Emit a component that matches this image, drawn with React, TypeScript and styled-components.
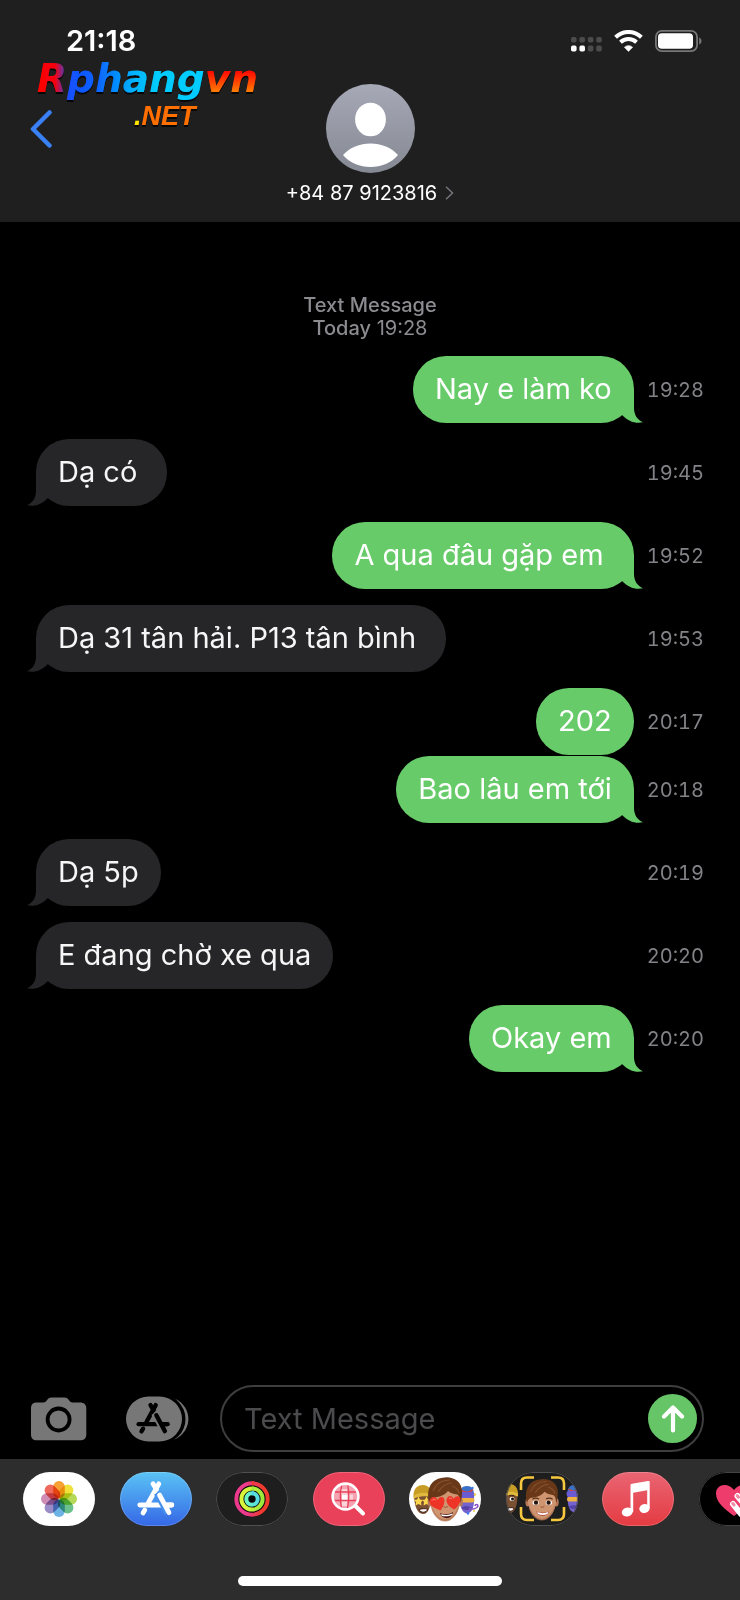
import React, { useState } from 'react';
import styled, { createGlobalStyle, css } from 'styled-components';

const GlobalStyle = createGlobalStyle`
  * {
    box-sizing: border-box;
  }

  body {
    margin: 0;
    background: #000000;
    font-family: Inter, 'Liberation Sans', sans-serif;
  }

  button {
    padding: 0;
    border: none;
    background: none;
    color: inherit;
    font: inherit;
    cursor: pointer;
  }

  svg {
    display: block;
    flex-shrink: 0;
  }
`;

const Screen = styled.div`
  display: flex;
  flex-direction: column;
  min-height: 100vh;
  overflow: hidden;
  color: #ffffff;
`;

/* header */

const Header = styled.header`
  position: relative;
  padding-bottom: 17px;
  background: #1f1f1f;
`;

const StatusBar = styled.div`
  display: flex;
  align-items: center;
  justify-content: space-between;
  height: 60px;
  padding: 21px 38px 0 66px;
`;

const Clock = styled.time`
  font-size: 29px;
  font-weight: 600;
  line-height: 40px;
`;

const StatusIcons = styled.div`
  display: flex;
  align-items: center;
  gap: 12px;
`;

const Watermark = styled.svg`
  position: absolute;
  top: 56px;
  left: 34px;
`;

const NavRow = styled.div`
  display: grid;
  grid-template-columns: 1fr auto 1fr;
  align-items: center;
  padding: 24px 30px 0;
`;

const BackButton = styled.button`
  justify-self: start;
`;

const ContactName = styled.button`
  display: flex;
  align-items: center;
  justify-content: center;
  gap: 8px;
  margin: 8px auto 0;
  font-size: 20px;
  line-height: 24px;
`;

/* thread */

const Thread = styled.main`
  flex: 1;
  padding: 72px 36px 0;
`;

const ThreadLabel = styled.p`
  margin: 0;
  padding-bottom: 16px;
  color: #8b8b90;
  font-size: 20px;
  line-height: 23px;
  text-align: center;

  strong {
    font-weight: 500;
  }
`;

const MessageRow = styled.div<{ $sent: boolean; $grouped: boolean }>`
  display: flex;
  align-items: center;
  gap: 13px;
  justify-content: ${({ $sent }) => ($sent ? 'flex-end' : 'space-between')};
  margin-top: ${({ $grouped }) => ($grouped ? '1px' : '16px')};

  &:first-of-type {
    margin-top: 0;
  }
`;

const Bubble = styled.div<{ $sent: boolean }>`
  position: relative;
  padding: 13px 22px 14px;
  border-radius: 33px;
  font-size: 29px;
  line-height: 40px;
  white-space: pre-wrap;
  ${({ $sent }) =>
    $sent
      ? css`
          background: #68cb69;
          color: #ffffff;
        `
      : css`
          background: #262628;
          color: #f6f6f6;
        `}
`;

const Tail = styled.svg<{ $sent: boolean }>`
  position: absolute;
  bottom: 0;
  ${({ $sent }) =>
    $sent
      ? css`
          right: -9px;
          fill: #68cb69;
        `
      : css`
          left: -9px;
          fill: #262628;
          transform: scaleX(-1);
        `}
`;

const SentAt = styled.time`
  min-width: 55px;
  color: #828287;
  font-size: 20px;
  font-variant-numeric: tabular-nums;
  line-height: 24px;
  text-align: right;
`;

/* composer */

const Composer = styled.form`
  display: flex;
  align-items: center;
  padding: 0 36px 7px 30px;
`;

const CameraButton = styled.button`
  margin-right: 39px;
`;

const Field = styled.div`
  display: flex;
  flex: 1;
  align-items: center;
  min-width: 0;
  height: 67px;
  margin-left: 31px;
  padding: 0 5px 0 22px;
  border: 2px solid #3e3e40;
  border-radius: 34px;
`;

const TextInput = styled.input`
  flex: 1;
  min-width: 0;
  padding: 0;
  border: none;
  outline: none;
  background: none;
  color: #ffffff;
  font-family: inherit;
  font-size: 29px;
  line-height: 40px;

  &::placeholder {
    color: #4b4b4e;
    opacity: 1;
  }
`;

const SendButton = styled.button`
  display: grid;
  place-items: center;
  width: 49px;
  height: 49px;
  border-radius: 50%;
  background: #66c567;
`;

/* app drawer */

const Drawer = styled.footer`
  padding: 13px 0 14px;
  overflow: hidden;
  background: #2d2d2d;
`;

const AppStrip = styled.nav`
  display: flex;
  justify-content: space-between;
  margin: 0 -31px 0 23px;
`;

const AppButton = styled.button<{ $fill: string; $outline?: string }>`
  position: relative;
  width: 72px;
  height: 54px;
  overflow: hidden;
  border-radius: 27px;
  background: ${({ $fill }) => $fill};

  &::after {
    content: '';
    position: absolute;
    inset: 0;
    border: 1px solid ${({ $outline }) => $outline || 'rgba(255, 255, 255, 0.2)'};
    border-radius: 27px;
  }
`;

const HomeIndicator = styled.div`
  width: 264px;
  height: 10px;
  margin: 50px auto 0;
  border-radius: 5px;
  background: #ffffff;
`;

const Petal = styled.rect`
  mix-blend-mode: multiply;
`;

const SignalIcon = () => (
  <svg width="31" height="22" viewBox="0 0 31 22" role="img" aria-label="Signal">
    {[0, 1, 2, 3].map((col) => (
      <g key={col}>
        <rect x={col * 8.4} y="7" width="5.6" height="5.6" rx="1.8" fill="#4c4c4c" />
        <rect x={col * 8.4} y="15.6" width="5.6" height="6" rx="1.8" fill={col < 2 ? '#fff' : '#4c4c4c'} />
      </g>
    ))}
  </svg>
);

const WifiIcon = () => (
  <svg width="29" height="22" viewBox="0 0 29 22" role="img" aria-label="Wi-Fi">
    <g fill="none" stroke="#fff" strokeWidth="4">
      <path d="M1.6 7.2C8.8.2 20.2.2 27.4 7.2" />
      <path d="M6.5 12.3C11 8 18 8 22.5 12.3" />
    </g>
    <path d="M14.5 21.4L10.4 17.2C12.7 15.1 16.3 15.1 18.6 17.2Z" fill="#fff" stroke="#fff" strokeWidth=".6" strokeLinejoin="round" />
  </svg>
);

const BatteryIcon = () => (
  <svg width="47" height="22" viewBox="0 0 47 22" role="img" aria-label="Battery">
    <rect x=".9" y=".9" width="41.2" height="20.2" rx="6" fill="none" stroke="#777" strokeWidth="1.8" />
    <rect x="3" y="3.2" width="35" height="15.6" rx="3.8" fill="#fff" />
    <path d="M44.2 7.6C47.3 8.8 47.3 13.4 44.2 14.6Z" fill="#777" />
  </svg>
);

const SiteLogo = () => (
  <Watermark width="234" height="76" viewBox="0 0 234 76" role="img" aria-label="Rphangvn.NET">
    <defs>
      <linearGradient id="logoCool" gradientUnits="userSpaceOnUse" x1="4" y1="0" x2="176" y2="0">
        <stop offset="0" stopColor="#ff0000" />
        <stop offset=".1" stopColor="#f50010" />
        <stop offset=".18" stopColor="#1450ff" />
        <stop offset=".34" stopColor="#0a62ff" />
        <stop offset=".56" stopColor="#00b4ff" />
        <stop offset=".7" stopColor="#00ccff" />
        <stop offset="1" stopColor="#00ccff" />
      </linearGradient>
      <linearGradient id="logoWarm" gradientUnits="userSpaceOnUse" x1="0" y1="14" x2="0" y2="38">
        <stop offset="0" stopColor="#ff0000" />
        <stop offset="1" stopColor="#ff8a00" />
      </linearGradient>
      <filter id="logoShadow">
        <feDropShadow dx="0" dy="2" stdDeviation=".6" floodColor="#000" floodOpacity=".8" />
      </filter>
    </defs>
    <g filter="url(#logoShadow)" fontStyle="italic" fontWeight="700">
      <text x="3" y="36" fontFamily="DejaVu Sans" fontSize="39" fill="url(#logoCool)">
        Rphang
        <tspan fill="url(#logoWarm)">vn</tspan>
      </text>
      <text x="100" y="69" fontFamily="Liberation Sans" fontSize="27" fill="#ffe600">
        .<tspan fill="#ff6f00">NET</tspan>
      </text>
    </g>
  </Watermark>
);

const Avatar = () => (
  <svg width="89" height="89" viewBox="0 0 89 89" role="img" aria-label="Contact">
    <defs>
      <linearGradient id="avatar" x1="0" y1="0" x2="0" y2="1">
        <stop offset="0" stopColor="#a6a9b6" />
        <stop offset="1" stopColor="#858993" />
      </linearGradient>
    </defs>
    <circle cx="44.5" cy="44.5" r="44.5" fill="url(#avatar)" />
    <ellipse cx="44.5" cy="35.5" rx="15.4" ry="16.8" fill="#fff" />
    <path d="M17 71C30 55.5 59 55.5 72 71C59 87 30 87 17 71Z" fill="#fff" />
  </svg>
);

const CameraIcon = () => (
  <svg width="57" height="46" viewBox="0 0 57 46" aria-hidden="true">
    <path
      d="M6.5 6.5H13.5C17 6.5 17 1.5 21.5 1.5H34.5C39 1.5 39 6.5 42.5 6.5H50C54 6.5 56.3 8.5 56.3 12.5V38.5C56.3 42.5 54 44.3 50 44.3H7C3 44.3 1 42.5 1 38.5V12.5C1 8.5 3 6.5 6.5 6.5Z"
      fill="#777"
    />
    <circle cx="28.6" cy="23.5" r="11" fill="none" stroke="#000" strokeWidth="3.8" />
  </svg>
);

interface StoreMarkProps {
  color: string;
  cut: string;
}

/* the crossed-pencils "A"; cut is the colour of the gap between the sticks */
const StoreMark: React.FC<StoreMarkProps> = ({ color, cut }) => (
  <g fill="none" strokeLinecap="round" strokeWidth="4.8">
    <path d="M33 11.8L36.5 17.5" stroke={color} />
    <path d="M19.8 33H51.8" stroke={color} />
    <path d="M38.8 11.8L28.5 30.5" stroke={color} />
    <path d="M24.8 38L23 41" stroke={color} />
    <path d="M37 21L47.5 41" stroke={cut} strokeWidth="6.5" strokeLinecap="butt" />
    <path d="M39.5 23L49 40.7" stroke={color} />
    <path d="M47 33H51.8" stroke={color} />
  </g>
);

const StoreIcon = () => (
  <svg width="63" height="46" viewBox="0 0 63 46" aria-hidden="true">
    <path d="M48.5 2.5C67 11 67 35 48.5 43.5Z" fill="#777" />
    <rect x="0" y="-1.5" width="59.5" height="49" rx="24.5" fill="#000" />
    <rect x="0" y=".5" width="56" height="45" rx="22.5" fill="#777" />
    <g transform="translate(-5.2 -1.5) scale(.9)">
      <StoreMark color="#000" cut="#777" />
    </g>
  </svg>
);

const petals = ['#f7a034', '#f0e13a', '#b5d957', '#6cc08b', '#6db3e3', '#9a8cc6', '#cf8cb4', '#ee6a5c'];

const PhotosArt = () => (
  <g>
    {petals.map((color, i) => (
      <Petal
        key={color}
        x="30.2"
        y="9"
        width="11.6"
        height="17.5"
        rx="5.8"
        fill={color}
        transform={`rotate(${i * 45} 36 27)`}
      />
    ))}
  </g>
);

const rings = [
  { r: 15.7, from: '#ea3a8c', to: '#f03a2e' },
  { r: 10.6, from: '#d8f53c', to: '#9be83c' },
  { r: 5.7, from: '#6cf5c0', to: '#4fd2ee' },
];

const FitnessArt = () => (
  <g fill="none" strokeWidth="4">
    <circle cx="36" cy="27" r="18" fill="#0a0a0a" />
    {rings.map(({ r, from, to }) => (
      <g key={r}>
        <linearGradient id={`ring${r}`} gradientUnits="userSpaceOnUse" x1="30" y1="0" x2="46" y2="0">
          <stop offset="0" stopColor={from} />
          <stop offset="1" stopColor={to} />
        </linearGradient>
        <circle cx="36" cy="27" r={r} stroke={`url(#ring${r})`} />
        <path d={`M36 ${27 - r}H38`} stroke={to} strokeLinecap="butt" />
      </g>
    ))}
  </g>
);

const ImagesArt = () => (
  <g>
    <circle cx="32.5" cy="24.5" r="12.5" fill="#f5a3b0" />
    <path d="M28 17H34V22H28ZM35 22.5H40V28H35ZM29 29H34V34H29Z" fill="#fbd5da" />
    <rect x="29" y="22.5" width="5.5" height="5.5" fill="#fff" />
    <path d="M22 20H43M21 28.5H43M28.8 13C27 20 27 29 28.5 36M34.8 13C36 20 36 29 34.5 36" stroke="#e9415a" strokeWidth="1.3" fill="none" />
    <circle cx="32.5" cy="24.5" r="12.9" fill="none" stroke="#fff" strokeWidth="2.6" />
    <path d="M42.5 34L50 41.5" stroke="#fff" strokeWidth="4" strokeLinecap="round" />
  </g>
);

const BrownFriend = ({ stars }: { stars?: boolean }) => (
  <g>
    <path d="M5 22C5 33 8 42 14 42C20 42 22 34 22 22Z" fill="#7a5032" />
    <path d="M4.5 25C4 17 8 13 14 13S23 18 22.5 24C17 21.5 10 22 4.5 25Z" fill="#c79d26" />
    <path d="M4.5 24C10 20 17 20 22.5 22.5V25.5C17 23.5 10 23.5 4.5 27Z" fill="#e0b93e" />
    <path d="M10 37.5C13 36.5 16 36.5 18.5 37C18 41 11.5 41.5 10 37.5Z" fill="#fff" stroke="#401d18" strokeWidth="1" />
    {stars ? (
      <path
        d="M9.5 24.5L11 27.5L14 28L12 30.3L12.5 33.5L9.5 32L6.5 33.5L7 30L5 28L8 27.5ZM17.5 24.5L19 27.5L22 28L20 30.3L20.5 33.5L17.5 32L14.5 33.5L15 30L13.5 28L16 27.5Z"
        fill="#fbd64b"
      />
    ) : (
      <g>
        <ellipse cx="16.5" cy="28" rx="2.5" ry="2" fill="#fff" />
        <circle cx="17" cy="28" r="1.5" fill="#1c1210" />
        <path d="M13.5 25C15 24 17.5 24 19 25" stroke="#2f1c14" strokeWidth="1" fill="none" />
      </g>
    )}
  </g>
);

const PurpleFriend = () => (
  <g>
    <path d="M51 25H65C65.5 34 63.5 41 58 41.5C53 41 51 35 51 25Z" fill="#7462cf" />
    <path d="M51 24C50.5 17 53 14 58 14S65 17 65 24Z" fill="#3a70c8" />
    <path d="M52 18C56 21 61 21 64 17.5" stroke="#d0433f" strokeWidth="1.5" fill="none" />
    <rect x="50" y="20" width="15.5" height="5.5" rx="2.5" fill="#6a5bd2" />
    <rect x="50.5" y="26" width="15" height="4.5" rx="2" fill="#eeb242" />
    <path d="M52 36C55 33.5 60 33.5 63 36C60 38.5 55 38.5 52 36Z" fill="#5442a8" />
  </g>
);

const BoyHead = () => (
  <g>
    <ellipse cx="21" cy="30" rx="2.4" ry="4.5" fill="#b87a56" />
    <ellipse cx="51.5" cy="30" rx="2.4" ry="4.5" fill="#b87a56" />
    <path d="M21 20C20.5 31 22 38 27 44C33 50.5 39.5 50.5 45.5 44C50.5 38 52 31 51 20C46 11 27 11 21 20Z" fill="#cf9470" />
    <path d="M22 32C25 42 30 47 36 47.5C42 47 47 42 50 32C50 40 46 45 41 48.5C38 49.8 34 49.8 31 48.5C26 45 22 40 22 32Z" fill="#b07150" opacity=".7" />
    <path d="M20 30C17 17 22 6 36 5.5C43 4.5 53.5 9 53 20C53 24 52.5 28 51.3 31C51 26 50 23.5 48.5 22.5C44 22 41 21 39 19C35 24 28 25.5 23.5 25.5C22 27 21 28.5 20 30Z" fill="#683819" />
    <path d="M24 19C27 11 34 8 41 8M29 20C33 14 37 11 43 11M43 14C46 15 49 17 50 21" stroke="#87502a" strokeWidth="1.2" fill="none" />
    <path d="M35 34C35 36 38 36 38.5 34" stroke="#a86a48" strokeWidth="1.2" fill="none" />
  </g>
);

const StickersArt = () => (
  <g>
    <BrownFriend stars />
    <PurpleFriend />
    <path d="M60 36C63 38 68 37 69 34C69 32 66 32 66 34" stroke="#8a52c4" strokeWidth="1.5" fill="none" />
    <circle cx="63.5" cy="16" r="1.2" fill="#3d7eea" />
    <circle cx="66" cy="22.5" r="1.2" fill="#f2cc46" />
    <circle cx="65" cy="39" r="1" fill="#f2cc46" />
    <circle cx="59" cy="41.5" r="1.2" fill="#3d7eea" />
    <BoyHead />
    <path d="M31 41C35 43 41 42.5 44 40C44 47.5 33 48.5 31 41Z" fill="#4b1713" />
    <path d="M32 42C36 43.5 40 43 43.5 41.5V43C40 44.5 36 44.5 33 44Z" fill="#fff" />
    <path d="M31.5 38.5C26 36 20 34 20.5 29C21.5 24 27 24 28.5 28C30.5 23 36 24.5 35.5 29C35 33.5 33.5 36 31.5 38.5Z" fill="#ee3427" />
    <path d="M45.5 37.5C41 35.5 37 32 37.5 27.5C38.5 22.5 43.5 23 44.5 27C47 22.5 52.5 24 51.5 28.5C50.5 32.5 48 35.5 45.5 37.5Z" fill="#ee3427" />
    <path d="M23 28.5C24 27 25.5 27 26.5 28M40 27C41 26 42 26 43 26.5" stroke="#ff8d80" strokeWidth="1" fill="none" />
  </g>
);

const MemojiArt = () => (
  <g>
    <g transform="translate(-10.5 -1)">
      <BrownFriend />
    </g>
    <g transform="translate(10.5 -1)">
      <PurpleFriend />
    </g>
    <g transform="translate(2 2) scale(.94)">
      <BoyHead />
      <g fill="#fff">
        <ellipse cx="29.5" cy="30.5" rx="3.4" ry="2.4" />
        <ellipse cx="43.5" cy="30.5" rx="3.4" ry="2.4" />
      </g>
      <g fill="#24150f">
        <circle cx="29.8" cy="30.5" r="2.3" />
        <circle cx="43.2" cy="30.5" r="2.3" />
      </g>
      <path d="M26 26.8C28 25.5 31 25.5 33 26.5M40.5 26.5C42.5 25.5 45.5 25.5 47.5 26.8" stroke="#5a3218" strokeWidth="1.3" fill="none" />
      <path d="M30 40C34 41.5 40 41.5 43.5 40C42.5 46 32 46 30 40Z" fill="#a8382f" />
      <path d="M31 40.5C35 42 39 42 42.8 40.5L42 42.5C39 44 35 44 32 42.5Z" fill="#fff" />
    </g>
    <path
      d="M28 5.5H21C17 5.5 15 7.5 15 11.5V18M45 5.5H52C56 5.5 58 7.5 58 11.5V18M15 35V42C15 46 17 48 21 48H28M58 35V42C58 46 56 48 52 48H45"
      fill="none"
      stroke="#f6c83f"
      strokeWidth="2.6"
    />
  </g>
);

const MusicArt = () => (
  <g fill="#fff">
    <path d="M28.5 13.5C28.5 12.4 29 12 30 11.8L46 9.1C47.2 8.9 47.7 9.3 47.7 10.3V36H45.2V18.2L31.2 20.8V40H28.5Z" />
    <ellipse cx="25.3" cy="40" rx="5.6" ry="4.4" transform="rotate(-15 25.3 40)" />
    <ellipse cx="42.5" cy="36.5" rx="5.3" ry="4.4" transform="rotate(-15 42.5 36.5)" />
  </g>
);

const TouchArt = () => (
  <g>
    <path d="M35 44C27 38 17 31 17 21.5C17 12 29 10 35 18C41 10 53 12 53 21.5C53 31 43 38 35 44Z" fill="#ee3d6c" />
    <g stroke="#fff" strokeWidth="6" strokeLinecap="round">
      <path d="M34 32L42 42M38.5 24L50 38" />
    </g>
    <g stroke="#f08aa4" strokeWidth="3" strokeLinecap="round">
      <path d="M33.8 31.5L35 33M38.3 23.7L39.5 25.2" />
    </g>
  </g>
);

const apps = [
  { name: 'Photos', fill: '#ffffff', art: <PhotosArt /> },
  {
    name: 'App Store',
    fill: 'linear-gradient(#5ac3f5, #3567e6)',
    art: <StoreMark color="#fff" cut="#4690ee" />,
  },
  { name: 'Fitness', fill: '#1e1e1e', outline: '#505050', art: <FitnessArt /> },
  { name: '#images', fill: '#e9415a', art: <ImagesArt /> },
  { name: 'Memoji Stickers', fill: '#ffffff', art: <StickersArt /> },
  { name: 'Memoji', fill: '#1e1e1e', outline: '#505050', art: <MemojiArt /> },
  { name: 'Music', fill: 'linear-gradient(#e96573, #e43b42)', art: <MusicArt /> },
  { name: 'Digital Touch', fill: '#000000', outline: '#444444', art: <TouchArt /> },
];

interface Message {
  text: string;
  time: string;
  sent?: boolean;
  grouped?: boolean;
  noTail?: boolean;
}

// trailing spaces are kept as typed, they widen the bubble
const messages: Message[] = [
  { text: 'Nay e làm ko', time: '19:28', sent: true },
  { text: 'Dạ có ', time: '19:45' },
  { text: 'A qua đâu gặp em ', time: '19:52', sent: true },
  { text: 'Dạ 31 tân hải. P13 tân bình ', time: '19:53' },
  { text: '202', time: '20:17', sent: true, noTail: true },
  { text: 'Bao lâu em tới', time: '20:18', sent: true, grouped: true },
  { text: 'Dạ 5p', time: '20:19' },
  { text: 'E đang chờ xe qua', time: '20:20' },
  { text: 'Okay em', time: '20:20', sent: true },
];

const MessageItem: React.FC<Message> = ({ text, time, sent = false, grouped = false, noTail = false }) => (
  <MessageRow $sent={sent} $grouped={grouped}>
    <Bubble $sent={sent}>
      {text}
      {!noTail && (
        <Tail $sent={sent} width="30" height="34" viewBox="0 0 30 34" aria-hidden="true">
          <path d="M21 0V19C21 26 24.5 31 30 33.3C22 35 15 32 9.5 26.5L5 20Z" />
        </Tail>
      )}
    </Bubble>
    <SentAt>{time}</SentAt>
  </MessageRow>
);

export default function App() {
  const [draft, setDraft] = useState('');

  return (
    <Screen>
      <GlobalStyle />
      <Header>
        <StatusBar>
          <Clock>21:18</Clock>
          <StatusIcons>
            <SignalIcon />
            <WifiIcon />
            <BatteryIcon />
          </StatusIcons>
        </StatusBar>
        <SiteLogo />
        <NavRow>
          <BackButton type="button" aria-label="Back">
            <svg width="23" height="40" viewBox="0 0 23 40">
              <path d="M19.5 3.5L3 20L19.5 36.5" fill="none" stroke="#3a80f6" strokeWidth="4.5" strokeLinecap="round" strokeLinejoin="round" />
            </svg>
          </BackButton>
          <Avatar />
        </NavRow>
        <ContactName type="button">
          +84 87 9123816
          <svg width="9" height="14" viewBox="0 0 9 14" aria-hidden="true">
            <path d="M1 .8L7.5 7L1 13.2" fill="none" stroke="#74747c" strokeWidth="1.5" />
          </svg>
        </ContactName>
      </Header>

      <Thread>
        <ThreadLabel>
          <strong>Text Message</strong>
          <br />
          <strong>Today</strong> 19:28
        </ThreadLabel>
        {messages.map((message) => (
          <MessageItem key={message.text} {...message} />
        ))}
      </Thread>

      <Composer onSubmit={(e) => e.preventDefault()}>
        <CameraButton type="button" aria-label="Camera">
          <CameraIcon />
        </CameraButton>
        <button type="button" aria-label="Apps">
          <StoreIcon />
        </button>
        <Field>
          <TextInput
            type="text"
            aria-label="Text Message"
            placeholder="Text Message"
            value={draft}
            onChange={(e) => setDraft(e.target.value)}
          />
          <SendButton type="submit" aria-label="Send">
            <svg width="24" height="28" viewBox="0 0 24 28">
              <path d="M12 25.5V3M3 11.5L12 2.5L21 11.5" fill="none" stroke="#fff" strokeWidth="4.2" strokeLinecap="round" strokeLinejoin="round" />
            </svg>
          </SendButton>
        </Field>
      </Composer>

      <Drawer>
        <AppStrip>
          {apps.map(({ name, fill, outline, art }) => (
            <AppButton key={name} type="button" aria-label={name} $fill={fill} $outline={outline}>
              <svg width="72" height="54" viewBox="0 0 72 54">
                {art}
              </svg>
            </AppButton>
          ))}
        </AppStrip>
        <HomeIndicator />
      </Drawer>
    </Screen>
  );
}
